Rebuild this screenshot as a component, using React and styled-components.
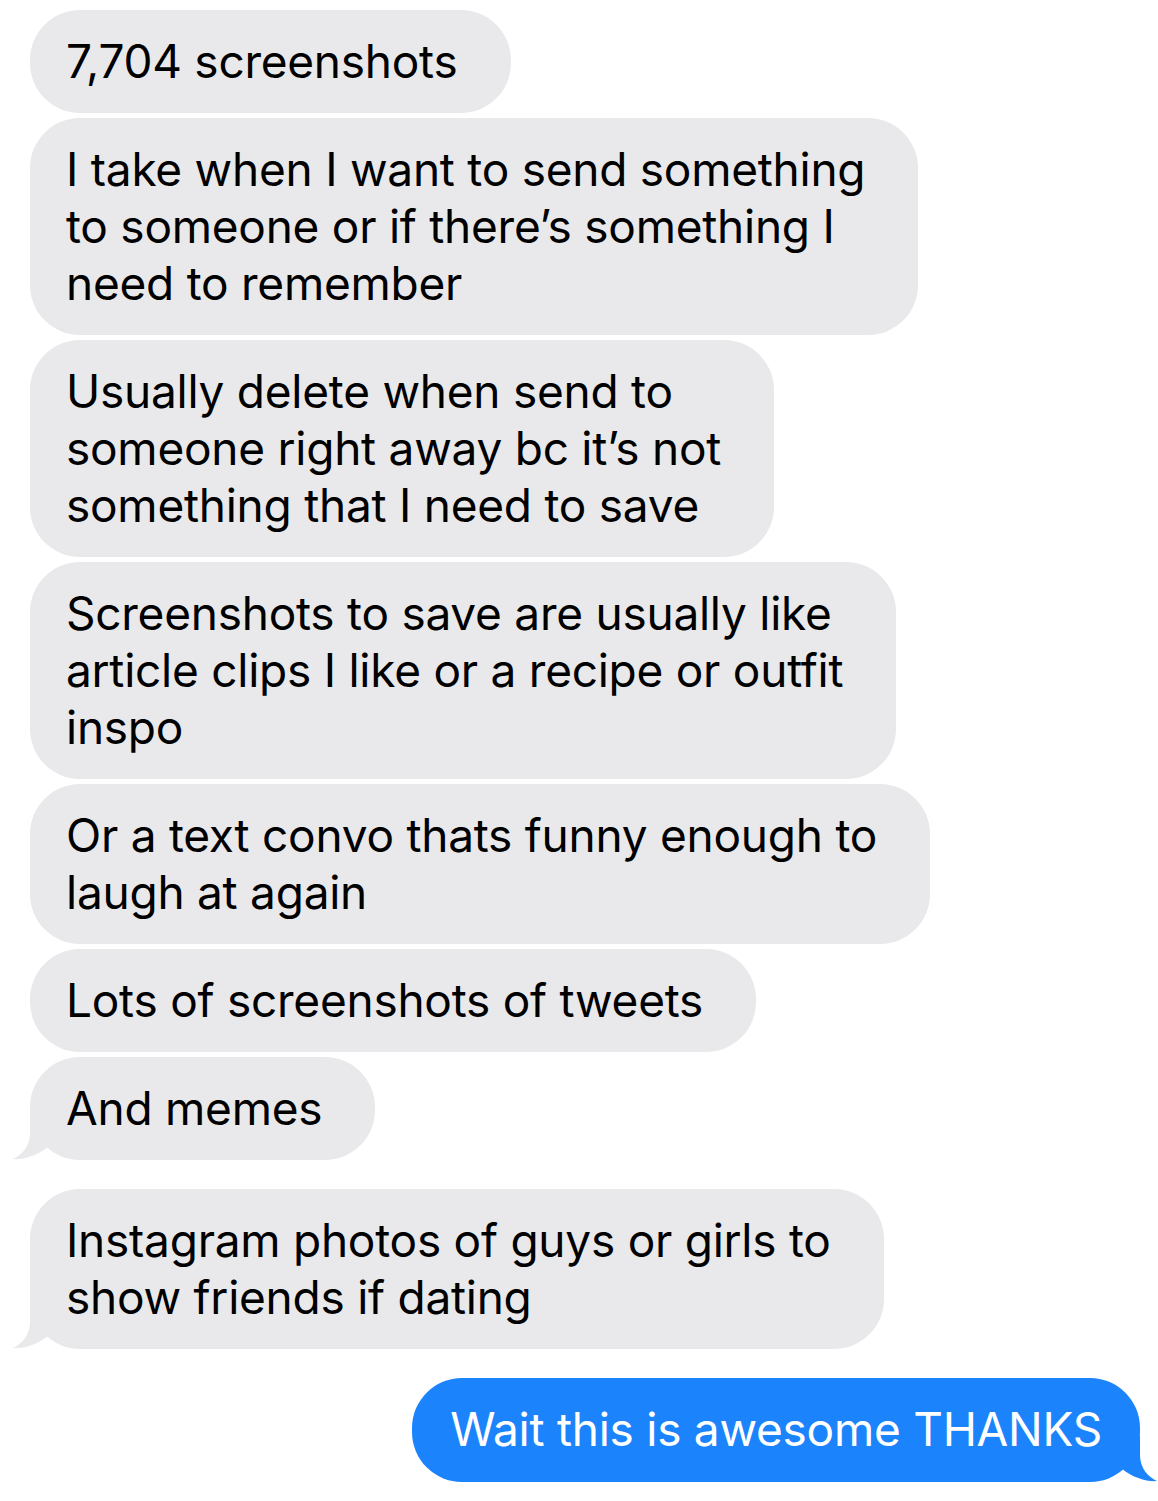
import styled, { createGlobalStyle } from 'styled-components';

const GlobalStyle = createGlobalStyle`
  html, body {
    margin: 0;
    padding: 0;
    background: #ffffff;
  }
  body {
    font-family: Inter, "Noto Sans", "Liberation Sans", sans-serif;
    -webkit-font-smoothing: antialiased;
  }
`;

const received = [
  { lines: ['7,704 screenshots'] },
  { lines: ['I take when I want to send something', 'to someone or if there\u2019s something I', 'need to remember'] },
  { lines: ['Usually delete when send to', 'someone right away bc it\u2019s not', 'something that I need to save'] },
  { lines: ['Screenshots to save are usually like', 'article clips I like or a recipe or outfit', 'inspo'] },
  { lines: ['Or a text convo thats funny enough to', 'laugh at again'] },
  { lines: ['Lots of screenshots of tweets'] },
  { lines: ['And memes'], tail: true },
];

const App = () => {
  return (
    <>
      <GlobalStyle />
      <Thread>
        <Group>
          {received.map((msg, i) => (
            <Bubble key={i}>
              {msg.lines.map((l, j) => (
                <Line key={j}>{l}</Line>
              ))}
              {msg.tail && <LeftTail />}
            </Bubble>
          ))}
        </Group>
        <Group>
          <Bubble>
            <Line>Instagram photos of guys or girls to</Line>
            <Line>show friends if dating</Line>
            <LeftTail />
          </Bubble>
        </Group>
        <SentGroup>
          <Bubble sent>
            <Line>Wait this is awesome THANKS</Line>
            <RightTail />
          </Bubble>
        </SentGroup>
      </Thread>
    </>
  );
};

export default App;

const LeftTail = () => (
  <TailSvg width='40' height='46' viewBox='0 0 40 46' side='left'>
    <path d='M17 0 L17 19 C17 32 9 41 0 45 C9 46 24 42 35 33 L35 0 Z' fill='#e9e9eb' />
  </TailSvg>
);

const RightTail = () => (
  <TailSvg width='40' height='46' viewBox='0 0 40 46' side='right'>
    <path d='M23 0 L23 19 C23 32 31 41 40 45 C31 46 16 42 5 33 L5 0 Z' fill='#1b84fc' />
  </TailSvg>
);

const Thread = styled.div`
  width: 1158px;
  padding: 10px 18px 19px 30px;
  box-sizing: border-box;
  display: flex;
  flex-direction: column;
  gap: 29px;
`;

const Group = styled.div`
  display: flex;
  flex-direction: column;
  align-items: flex-start;
  gap: 5px;
`;

const SentGroup = styled(Group)`
  align-items: flex-end;
`;

const Bubble = styled.div`
  position: relative;
  background: ${({ sent }) => (sent ? '#1b84fc' : '#e9e9eb')};
  color: ${({ sent }) => (sent ? '#ffffff' : '#000000')};
  border-radius: 50px;
  padding: ${({ sent }) => (sent ? '23px 38px 24px 38px' : '23px 53px 23px 36px')};
  font-size: 46px;
  line-height: 57px;
  letter-spacing: -0.25px;
  white-space: nowrap;
`;

const Line = styled.div``;

const TailSvg = styled.svg`
  position: absolute;
  bottom: 0;
  ${({ side }) => (side === 'left' ? 'left: -17px;' : 'right: -17px;')}
  display: block;
`;
